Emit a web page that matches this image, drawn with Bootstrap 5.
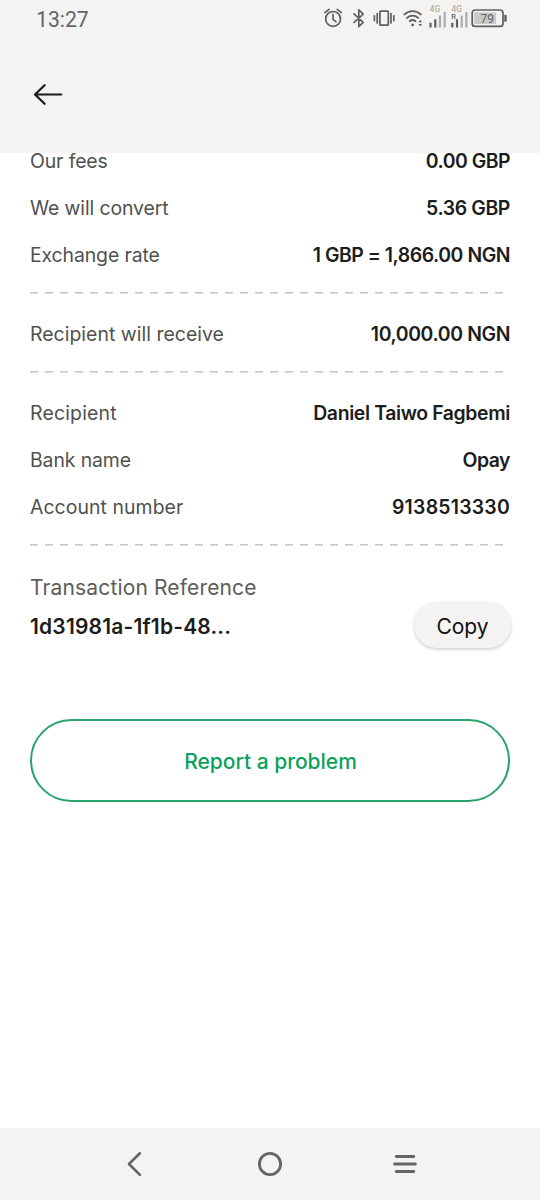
<!DOCTYPE html>
<html lang="en">
<head>
<meta charset="utf-8">
<meta name="viewport" content="width=device-width, initial-scale=1">
<title>Transaction details</title>
<link href="https://cdn.jsdelivr.net/npm/bootstrap@5.3.0/dist/css/bootstrap.min.css" rel="stylesheet">
<style>
body{font-family:Inter,"Liberation Sans",sans-serif;color:#1c1d1b;background:#fff;width:540px;height:1200px;overflow:hidden}
.chrome{background:#f4f3f2}
.topbar{height:153px}
.statusbar{height:38px;padding:0 30px 0 36px;font-family:Roboto,sans-serif;color:#646464}
.clock{font-size:21.2px;line-height:39px}
.back{margin:44px 0 0 32px;width:32px;height:25px}
.details{margin-top:-16px;padding:0 30px}
.line{height:47.33px;font-size:19.4px;line-height:30px;white-space:nowrap}
.line dt{font-weight:400;color:#50514f;letter-spacing:var(--l,-.1px)}
.line dd{font-weight:600;letter-spacing:var(--v,-.5px)}
.l-even{--l:.04px}
.l-wide{--l:.2px}
.l-soft{--l:.08px;--v:.25px}
.v-name{--v:-.37px}
.v-rate{--v:-.45px}
.dashes{height:31.33px;background:repeating-linear-gradient(90deg,#c6c6c5 0 7.6px,transparent 7.6px 15px) 0 13.4px/475px 1.6px no-repeat}
.ref{padding-top:10.5px}
.ref-label{font-size:21px;line-height:29px;color:#5c5d5b;letter-spacing:.15px}
.ref-id{font-size:21px;line-height:30px;font-weight:600;padding-top:5px;letter-spacing:.18px}
.btn-copy{width:97px;height:46px;font-size:21px;background:#f4f3f2;color:#111;box-shadow:0 1.5px 3.5px rgba(0,0,0,.2);padding:3px 0 0;margin-right:-1px}
.btn-report{height:83px;margin-top:71px;border:2px solid #2aa36d;color:#0aa15c;font-size:21px;font-weight:500;padding:3px 0 0 1px}
.navkeys{height:72px;padding:0 123px}
</style>
</head>
<body class="d-flex flex-column">
<header class="chrome topbar position-relative z-1 flex-shrink-0">
  <div class="statusbar d-flex justify-content-between">
    <span class="clock">13:27</span>
    <svg width="190" height="38" viewBox="320 0 190 38" fill="none" stroke="#5f5f5e" stroke-width="1.7" stroke-linecap="round" stroke-linejoin="round" aria-hidden="true">
      <!-- alarm -->
      <circle cx="333.1" cy="18.9" r="7.4"/>
      <path d="M333 14.4v4.9l2.9 2.3M324.9 12.6l4.1-3.2M337.2 9.4l4.1 3.2"/>
      <!-- bluetooth -->
      <path d="M354 13.9l9.2 8.4-4.4 4.4V9.8l4.4 4.3-9.2 8.3"/>
      <!-- vibrate -->
      <rect x="379.9" y="11.2" width="8.4" height="14" rx=".7"/>
      <path d="M377.2 13.5v9.4M374.4 15.8v4.8M391 13.5v9.4M393.8 15.8v4.8"/>
      <!-- wifi -->
      <path d="M404.4 14.4c4.8-4.4 11.6-4.4 16.4 0M407 17.9c3.4-3 7.8-3 11.2 0M409.7 21.2c1.8-1.5 4-1.5 5.8 0" stroke-width="1.9"/>
      <g fill="#5f5f5e" stroke="none">
        <circle cx="412.6" cy="24.9" r="1.4"/>
        <path d="M418.3 22.3l1.9-2.3 1.9 2.3zM418.3 24l1.9 2.3 1.9-2.3z"/>
        <!-- signal strength, two SIM slots -->
        <path d="M429.4 22.7h2.2v4.8h-2.2zM434.2 19.2h2.2v8.3h-2.2zM451.2 22.7h2.2v4.8h-2.2zM455.9 19.2h2.2v8.3h-2.2z"/>
        <path fill="#acacab" d="M438.9 15.5h2.2v12h-2.2zM443.6 12h2.2v15.5h-2.2zM460.6 15.5h2.2v12h-2.2zM465.3 12h2.2v15.5h-2.2z"/>
        <g font-family="Roboto,sans-serif" font-size="8.4"><text x="429.8" y="11.6" fill="#a0a09f">4G</text><text x="451.6" y="11.6" fill="#a0a09f">4G</text><text x="451.2" y="19" font-size="7.4" font-weight="500">R</text></g>
        <rect x="474.2" y="12.4" width="21.8" height="11.6" fill="#c9c9c8"/>
        <path d="M504.3 14.8h1.2q1.2 0 1.2 1.2v4.6q0 1.2-1.2 1.2h-1.2z"/>
        <text x="480.6" y="22.6" font-family="Roboto,sans-serif" font-size="12">79</text>
      </g>
      <rect x="472.2" y="10" width="30.8" height="16.4" rx="3"/>
    </svg>
  </div>
  <svg class="back d-block" viewBox="32 82 32 25" fill="none" stroke="#191a18" stroke-width="2.2" stroke-linecap="round" stroke-linejoin="round" role="img" aria-label="Back"><path d="M61.3 94.5H35M44.6 85.2l-9.6 9.3 9.6 9.3"/></svg>
</header>
<main class="details flex-grow-1">
  <dl class="mb-0">
    <div class="line d-flex justify-content-between align-items-center"><dt>Our fees</dt><dd class="mb-0">0.00 GBP</dd></div>
    <div class="line d-flex justify-content-between align-items-center v-name"><dt>We will convert</dt><dd class="mb-0">5.36 GBP</dd></div>
    <div class="line d-flex justify-content-between align-items-center v-rate"><dt>Exchange rate</dt><dd class="mb-0">1 GBP = 1,866.00 NGN</dd></div>
    <div class="dashes"></div>
    <div class="line d-flex justify-content-between align-items-center v-name l-even"><dt>Recipient will receive</dt><dd class="mb-0">10,000.00 NGN</dd></div>
    <div class="dashes"></div>
    <div class="line d-flex justify-content-between align-items-center v-name l-wide"><dt>Recipient</dt><dd class="mb-0">Daniel Taiwo Fagbemi</dd></div>
    <div class="line d-flex justify-content-between align-items-center"><dt>Bank name</dt><dd class="mb-0">Opay</dd></div>
    <div class="line d-flex justify-content-between align-items-center l-soft"><dt>Account number</dt><dd class="mb-0">9138513330</dd></div>
    <div class="dashes"></div>
  </dl>
  <section class="ref">
    <div class="ref-label">Transaction Reference</div>
    <div class="d-flex justify-content-between align-items-center">
      <span class="ref-id">1d31981a-1f1b-48...</span>
      <button type="button" class="btn btn-copy rounded-pill border-0">Copy</button>
    </div>
  </section>
  <button type="button" class="btn btn-report rounded-pill w-100">Report a problem</button>
</main>
<nav class="chrome navkeys d-flex justify-content-between align-items-center flex-shrink-0">
  <svg width="24" height="26" viewBox="0 0 24 26" fill="none" stroke="#646463" stroke-width="2.6" stroke-linecap="round" stroke-linejoin="round"><path d="M16.9 2.3L6 13l10.9 10.8"/></svg>
  <svg width="24" height="26" viewBox="0 0 24 26" fill="none" stroke="#646463" stroke-width="2.8"><circle cx="12" cy="13" r="10.6"/></svg>
  <svg width="24" height="26" viewBox="0 0 24 26" fill="none" stroke="#646463" stroke-width="2.8" stroke-linecap="round"><path d="M3.2 5.5h17.6M1.6 13h20.8M3.2 20.5h17.6"/></svg>
</nav>
<script src="https://cdn.jsdelivr.net/npm/bootstrap@5.3.0/dist/js/bootstrap.bundle.min.js"></script>
</body>
</html>
